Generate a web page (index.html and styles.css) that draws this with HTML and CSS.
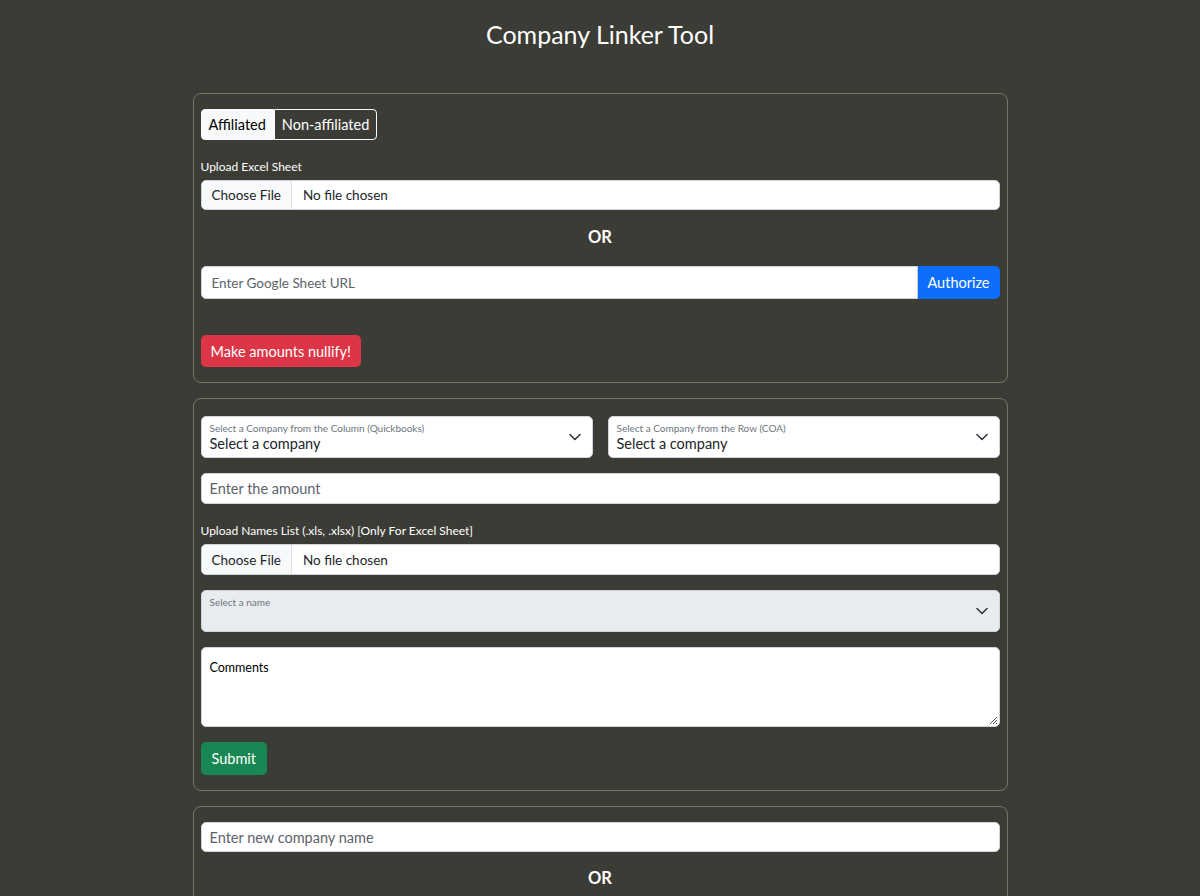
FILE: index.html
```html
<!DOCTYPE html>
<html>
<head>
<meta charset="utf-8">
<link rel="stylesheet" href="styles.css">
</head>
<body>
<h1 class="title">Company Linker Tool</h1>
<main class="wrap">
  <section class="card card-a">
    <div class="btn-group">
      <button class="seg seg-on">Affiliated</button>
      <button class="seg seg-off">Non-affiliated</button>
    </div>
    <label class="lbl lbl-first">Upload Excel Sheet</label>
    <div class="file">
      <span class="file-btn">Choose File</span>
      <span class="file-name">No file chosen</span>
    </div>
    <div class="or">OR</div>
    <div class="input-group">
      <input class="ctl ctl-url" placeholder="Enter Google Sheet URL">
      <button class="btn btn-blue">Authorize</button>
    </div>
    <div class="spacer"></div>
    <button class="btn btn-red">Make amounts nullify!</button>
  </section>

  <section class="card card-b">
    <div class="row2">
      <div class="floating">
        <span class="fl-lbl">Select a Company from the Column (Quickbooks)</span>
        <span class="fl-val">Select a company</span>
        <svg class="chev" width="12" height="8" viewBox="0 0 12 8"><path d="M1 1.5l5 5 5-5" fill="none" stroke="#343a40" stroke-width="1.6" stroke-linecap="round" stroke-linejoin="round"/></svg>
      </div>
      <div class="floating">
        <span class="fl-lbl">Select a Company from the Row (COA)</span>
        <span class="fl-val">Select a company</span>
        <svg class="chev" width="12" height="8" viewBox="0 0 12 8"><path d="M1 1.5l5 5 5-5" fill="none" stroke="#343a40" stroke-width="1.6" stroke-linecap="round" stroke-linejoin="round"/></svg>
      </div>
    </div>
    <input class="ctl ctl-amt" placeholder="Enter the amount">
    <label class="lbl">Upload Names List (.xls, .xlsx) [Only For Excel Sheet]</label>
    <div class="file file-tall">
      <span class="file-btn">Choose File</span>
      <span class="file-name">No file chosen</span>
    </div>
    <div class="floating disabled">
      <span class="fl-lbl">Select a name</span>
      <span class="fl-val"></span>
      <svg class="chev" width="12" height="8" viewBox="0 0 12 8"><path d="M1 1.5l5 5 5-5" fill="none" stroke="#343a40" stroke-width="1.6" stroke-linecap="round" stroke-linejoin="round"/></svg>
    </div>
    <div class="textarea">
      <span class="ta-lbl">Comments</span>
      <svg class="grip" width="10" height="10" viewBox="0 0 10 10"><path d="M9 2L2 9M9 5L5 9M9 8L8 9" stroke="#555" stroke-width="1"/></svg>
    </div>
    <button class="btn btn-green">Submit</button>
  </section>

  <section class="card card-c">
    <input class="ctl ctl-new" placeholder="Enter new company name">
    <div class="or">OR</div>
  </section>
</main>
</body>
</html>
```

FILE: styles.css
```css
* { box-sizing: border-box; }
html, body { margin: 0; padding: 0; }
body {
  background: #3c3c36;
  font-family: Lato, "Open Sans", sans-serif;
  color: #fff;
  height: 896px;
  overflow: hidden;
}
.title {
  margin: 0;
  padding-top: 17px;
  height: 93px;
  text-align: center;
  font-size: 25px;
  font-weight: 400;
  line-height: 34px;
}
.wrap {
  width: 815px;
  margin: 0 auto;
  display: flex;
  flex-direction: column;
  gap: 15px;
}
.card {
  border: 1px solid #6f786a;
  border-radius: 8px;
  padding: 15px 7px;
  display: flex;
  flex-direction: column;
  align-items: stretch;
}
.btn-group {
  display: flex;
  align-self: flex-start;
  height: 31px;
}
.seg {
  font: inherit;
  font-size: 14.5px;
  padding: 0 7px;
  border: 1px solid #f8f9fa;
  cursor: pointer;
}
.seg-on {
  background: #f8f9fa;
  color: #000;
  border-radius: 4px 0 0 4px;
}
.seg-off {
  background: #3c3c36;
  color: #fff;
  border-radius: 0 4px 4px 0;
}
.lbl {
  display: block;
  font-size: 12px;
  line-height: 16px;
  margin: 19px 0 5px;
  color: #fff;
}
.file {
  display: flex;
  height: 30px;
  background: #fff;
  border-radius: 5px;
  border: 1px solid #ced4da;
  overflow: hidden;
  font-size: 13.5px;
  color: #212529;
  align-items: stretch;
}
.file-tall { height: 31px; }
.file-btn {
  background: #f8f9fa;
  border-right: 1px solid #dee2e6;
  padding: 0 10px;
  display: flex;
  align-items: center;
}
.file-name {
  padding: 0 11px;
  display: flex;
  align-items: center;
}
.or {
  text-align: center;
  font-weight: 700;
  font-size: 16.5px;
  line-height: 22px;
  margin: 16px 0 18px;
}
.input-group {
  display: flex;
  height: 33px;
}
.ctl {
  font: inherit;
  border: 1px solid #ced4da;
  border-radius: 5px;
  background: #fff;
  outline: none;
  color: #212529;
}
.ctl::placeholder { color: #5c636a; }
.ctl-url {
  flex: 1;
  font-size: 13.5px;
  padding: 0 10px;
  border-radius: 5px 0 0 5px;
}
.btn {
  font: inherit;
  font-size: 14.5px;
  color: #fff;
  border: none;
  border-radius: 5px;
  cursor: pointer;
  padding: 0 10px;
}
.btn-blue {
  background: #0d6efd;
  border-radius: 0 5px 5px 0;
  width: 82px;
  padding: 0;
}
.spacer { height: 36px; }
.btn-red {
  background: #dc3545;
  align-self: flex-start;
  height: 32px;
}
.card-b { padding-top: 17px; padding-bottom: 15px; }
.row2 {
  display: grid;
  grid-template-columns: 1fr 1fr;
  gap: 15px;
}
.floating {
  position: relative;
  height: 42px;
  background: #fff;
  border: 1px solid #ced4da;
  border-radius: 5px;
  padding: 5px 8px 0;
  display: flex;
  flex-direction: column;
  color: #212529;
}
.fl-lbl {
  font-size: 10px;
  line-height: 12px;
  color: #6c757d;
}
.fl-val {
  font-size: 14.5px;
  line-height: 20px;
}
.chev {
  position: absolute;
  right: 11px;
  top: 16px;
}
.disabled {
  background: #e9ecef;
  margin-top: 15px;
}
.ctl-amt {
  margin-top: 15px;
  height: 31px;
  font-size: 14.5px;
  padding: 0 8px;
}
.textarea {
  position: relative;
  margin-top: 15px;
  height: 80px;
  background: #fff;
  border: 1px solid #ced4da;
  border-radius: 5px;
  padding: 12px 8px;
  color: #000;
  font-size: 12.5px;
}
.grip {
  position: absolute;
  right: 1px;
  bottom: 1px;
}
.btn-green {
  background: #198754;
  align-self: flex-start;
  height: 33px;
  margin-top: 15px;
  padding: 0 11px;
}
.ctl-new {
  height: 30px;
  font-size: 14.5px;
  padding: 0 8px;
}
.card-c .or { margin: 15px 0 10px; }
```
